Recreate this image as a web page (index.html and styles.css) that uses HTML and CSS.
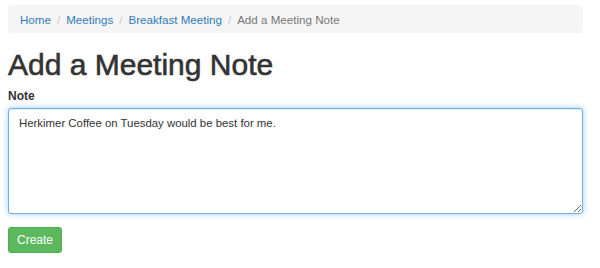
FILE: index.html
```html
<!DOCTYPE html>
<html>
<head>
<meta charset="utf-8">
<link rel="stylesheet" href="styles.css">
</head>
<body>
<div class="container">
  <ol class="breadcrumb">
    <li><a href="#">Home</a></li>
    <li><a href="#">Meetings</a></li>
    <li><a href="#">Breakfast Meeting</a></li>
    <li class="active">Add a Meeting Note</li>
  </ol>
  <h1 class="title">Add a Meeting Note</h1>
  <form class="form">
    <div class="form-group">
      <label class="label" for="note">Note</label>
      <textarea id="note" class="control" spellcheck="true">Herkimer Coffee on Tuesday would be best for me.</textarea>
    </div>
    <button type="button" class="btn">Create</button>
  </form>
</div>
</body>
</html>
```

FILE: styles.css
```css
html, body {
  margin: 0;
  padding: 0;
  background: #fff;
}
body {
  font-family: "Liberation Sans", Arial, sans-serif;
  font-size: 12px;
  color: #333;
}
.container {
  width: 575px;
  padding: 5px 8px 0 8px;
}
.breadcrumb {
  list-style: none;
  margin: 0;
  padding: 0 12px;
  height: 28px;
  display: flex;
  align-items: center;
  background: #f5f5f5;
  border-radius: 4px;
  font-size: 11.6px;
}
.breadcrumb li + li::before {
  content: "/";
  color: #ccc;
  padding: 0 6px;
}
.breadcrumb a {
  color: #337ab7;
  text-decoration: none;
}
.breadcrumb .active {
  color: #777;
}
.title {
  margin: 14px 0 0 0;
  font-size: 30px;
  font-weight: 400;
  -webkit-text-stroke: 0.6px #333;
  line-height: 36px;
  color: #333;
}
.form {
  margin: 0;
}
.form-group {
  display: flex;
  flex-direction: column;
}
.label {
  font-weight: bold;
  font-size: 12px;
  line-height: 14px;
  margin-top: 6px;
  margin-bottom: 5px;
}
.control {
  box-sizing: border-box;
  width: 575px;
  height: 106px;
  margin: 0;
  padding: 6px 10px;
  font-family: "Liberation Sans", Arial, sans-serif;
  font-size: 11.4px;
  line-height: 17px;
  color: #333;
  border: 1px solid #66afe9;
  border-radius: 3px;
  outline: 0;
  box-shadow: inset 0 1px 1px rgba(0,0,0,.075), 0 0 6px rgba(102,175,233,.6);
  resize: vertical;
}
.btn {
  margin-top: 13px;
  width: 54px;
  height: 26px;
  padding: 0;
  font-family: "Liberation Sans", Arial, sans-serif;
  font-size: 12px;
  color: #fff;
  background: #5cb85c;
  border: 1px solid #4cae4c;
  border-radius: 3px;
}
```
